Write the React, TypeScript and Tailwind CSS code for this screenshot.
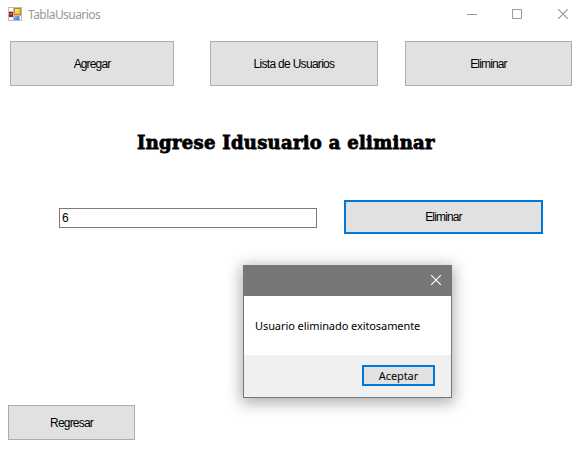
import type { ReactNode } from "react";

const sans = "font-['Liberation_Sans',Arial,sans-serif]";
const ui = "font-['Noto_Sans','Open_Sans',sans-serif]";

function FormButton({ className, children }: { className: string; children: ReactNode }) {
  return (
    <button
      type="button"
      className={`flex shrink-0 items-center justify-center bg-[#e1e1e1] text-[12px] leading-none whitespace-nowrap text-black ${sans} ${className}`}
    >
      {children}
    </button>
  );
}

function FormIcon() {
  return (
    <svg width="14" height="14" viewBox="0 0 14 14" shapeRendering="crispEdges">
      <defs>
        <linearGradient id="gold" x1="0" y1="0" x2="1" y2="1">
          <stop offset="0" stopColor="#ffe98c" />
          <stop offset="1" stopColor="#f0b51c" />
        </linearGradient>
        <linearGradient id="blue" x1="0" y1="0" x2="1" y2="1">
          <stop offset="0" stopColor="#8dbdff" />
          <stop offset="1" stopColor="#3474dc" />
        </linearGradient>
      </defs>
      <rect width="14" height="14" fill="#bdbdbd" />
      <path d="M1 1h4v3H1zM1 10h4v3H1zM12 9h1v4h-1z" fill="#fff" />
      <rect x="1" y="5" width="4" height="5" fill="#a61310" />
      <rect x="2" y="6" width="2" height="2" fill="#e65a4b" />
      <rect x="6" y="1" width="7" height="7" fill="#b98a14" />
      <rect x="7" y="2" width="5" height="5" fill="url(#gold)" />
      <rect x="6" y="9" width="5" height="4" fill="url(#blue)" />
    </svg>
  );
}

function Cross({ className }: { className: string }) {
  return (
    <svg width="10" height="10" viewBox="0 0 10 10" className={className} fill="none" stroke="currentColor" strokeWidth="1.2">
      <path d="M0 0l10 10M10 0l-10 10" />
    </svg>
  );
}

function MessageDialog() {
  return (
    <section
      role="dialog"
      className={`absolute top-[265px] left-[243px] flex h-[133px] w-[209px] flex-col border border-[#777] bg-white text-black shadow-[0_3px_14px_2px_rgba(0,0,0,0.32)] ${ui}`}
    >
      <header className="flex h-[30px] items-center justify-end bg-[#777] pr-[10px]">
        <Cross className="-mt-0.5 text-white" />
      </header>
      <p className="flex flex-1 items-center pl-[11px] text-[11px] leading-none tracking-[-0.08px] whitespace-nowrap">
        Usuario eliminado exitosamente
      </p>
      <footer className="flex h-[42px] justify-end bg-[#f0f0f0] pt-[10px] pr-4">
        <button
          type="button"
          className="flex h-[21px] w-[73px] items-center justify-center border-2 border-[#0078d7] bg-[#e1e1e1] text-[11px] leading-none tracking-[-0.1px]"
        >
          Aceptar
        </button>
      </footer>
    </section>
  );
}

export default function App() {
  return (
    <main className="relative flex h-[451px] w-[584px] flex-col overflow-hidden bg-white">
      <header className="flex h-[41px] shrink-0 items-start pt-[7px] pl-2">
        <FormIcon />
        <h1 className={`ml-[6px] text-[12px] leading-[16px] tracking-[-0.55px] text-[#999] ${ui}`}>TablaUsuarios</h1>
        <div className="mt-[2px] mr-4 ml-auto flex gap-[35px] text-[#999]">
          <svg width="10" height="10" viewBox="0 0 10 10" stroke="currentColor">
            <path d="M0 5.5h10" />
          </svg>
          <svg width="10" height="10" viewBox="0 0 10 10" fill="none" stroke="currentColor">
            <path d="M.5 .5h9v9h-9z" />
          </svg>
          <Cross className="ml-px" />
        </div>
      </header>

      <nav className="flex shrink-0 pl-[10px]">
        <FormButton className="h-[45px] w-[164px] border border-[#adadad] tracking-[-0.85px]">Agregar</FormButton>
        <FormButton className="ml-9 h-[45px] w-[168px] border border-[#adadad] tracking-[-0.7px]">
          Lista de Usuarios
        </FormButton>
        <FormButton className="ml-[27px] h-[45px] w-[167px] border border-[#adadad] tracking-[-0.85px]">
          Eliminar
        </FormButton>
      </nav>

      <h2 className="mt-[44px] ml-[137px] h-[26px] shrink-0 font-['DejaVu_Serif',serif] text-[18px] leading-[26px] font-bold tracking-[0.29px] whitespace-nowrap text-black [-webkit-text-stroke:0.8px_black]">
        Ingrese Idusuario a eliminar
      </h2>

      <div className="mt-[44px] flex h-[34px] shrink-0 items-start pl-[59px]">
        <input
          defaultValue="6"
          className={`mt-2 h-5 w-[258px] border border-[#7a7a7a] bg-white px-[2px] text-[12px] leading-none text-black outline-none ${sans}`}
        />
        <FormButton className="ml-[27px] h-[34px] w-[199px] border-2 border-[#0078d7] tracking-[-0.85px]">
          Eliminar
        </FormButton>
      </div>

      <footer className="mt-auto mb-[11px] pl-2">
        <FormButton className="h-[35px] w-[127px] border border-[#adadad] tracking-[-0.8px]">Regresar</FormButton>
      </footer>

      <MessageDialog />
    </main>
  );
}
